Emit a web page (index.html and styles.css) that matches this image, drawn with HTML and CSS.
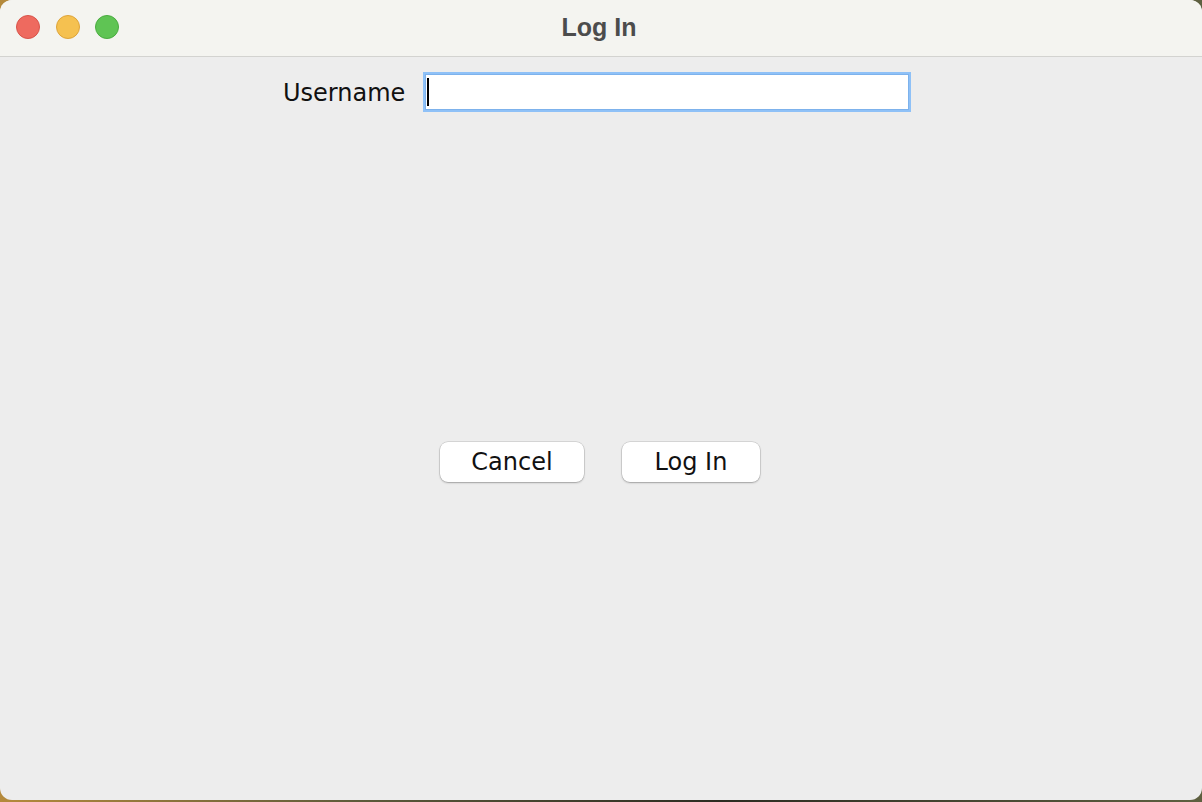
FILE: index.html
```html
<!DOCTYPE html>
<html>
<head>
<meta charset="utf-8">
<title>Log In</title>
<link rel="stylesheet" href="styles.css">
</head>
<body>
<div class="window">
  <div class="titlebar">
    <div class="lights">
      <span class="light red"></span>
      <span class="light yellow"></span>
      <span class="light green"></span>
    </div>
    <div class="title">Log In</div>
  </div>
  <div class="content">
    <div class="field-row">
      <label class="label">Username</label>
      <div class="input"><span class="caret"></span></div>
    </div>
    <div class="button-row">
      <button class="btn btn-cancel">Cancel</button>
      <button class="btn btn-login">Log In</button>
    </div>
  </div>
</div>
</body>
</html>
```
FILE: styles.css
```css
html, body {
  margin: 0;
  padding: 0;
}
body {
  width: 1202px;
  height: 802px;
  background: linear-gradient(90deg, #b58a3c 0%, #5c5a3a 30%, #2c2c22 60%, #5e6040 100%);
  overflow: hidden;
}
.window {
  width: 1202px;
  height: 800px;
  border-radius: 12px;
  overflow: hidden;
  background: #ededed;
  display: flex;
  flex-direction: column;
  font-family: "DejaVu Sans", "Liberation Sans", sans-serif;
}
.titlebar {
  position: relative;
  height: 56px;
  flex: none;
  background: #f4f4f0;
  border-bottom: 1px solid #d3d3d0;
  display: flex;
  align-items: center;
  justify-content: center;
}
.lights {
  position: absolute;
  left: 16px;
  top: 15px;
  display: flex;
  gap: 15.5px;
}
.light {
  width: 24px;
  height: 24px;
  border-radius: 50%;
  box-sizing: border-box;
}
.red { background: #ee6a5f; border: 1px solid #d8544a; }
.yellow { background: #f5c150; border: 1px solid #dea43a; }
.green { background: #5fc454; border: 1px solid #4aac40; }
.title {
  font-family: "Liberation Sans", Arial, sans-serif;
  font-weight: bold;
  font-size: 25px;
  color: #4c4c4c;
  margin-left: -4px;
  margin-top: -2px;
}
.content {
  flex: 1;
  display: flex;
  flex-direction: column;
}
.field-row {
  display: flex;
  align-items: center;
  padding-top: 15px;
  padding-left: 283px;
}
.label {
  font-size: 24px;
  color: #111;
  width: 140px;
  margin-top: 2px;
}
.input {
  width: 482px;
  height: 36px;
  background: #fff;
  border: 2px solid #8fc1f7;
  box-shadow: inset 0 0 0 1px #7db2ec;
  display: flex;
  align-items: center;
  padding-left: 2px;
}
.caret {
  width: 2px;
  height: 28px;
  background: #000;
}
.button-row {
  display: flex;
  gap: 38px;
  padding-left: 440px;
  margin-top: 330px;
}
.btn {
  height: 40px;
  border: none;
  border-radius: 8px;
  background: #fff;
  box-shadow: 0 0 0 0.5px rgba(0,0,0,0.18), 0 1px 2px rgba(0,0,0,0.25);
  font-family: "DejaVu Sans", "Liberation Sans", sans-serif;
  font-size: 24px;
  color: #111;
  padding: 0;
}
.btn-cancel { width: 144px; }
.btn-login { width: 138px; }
```
